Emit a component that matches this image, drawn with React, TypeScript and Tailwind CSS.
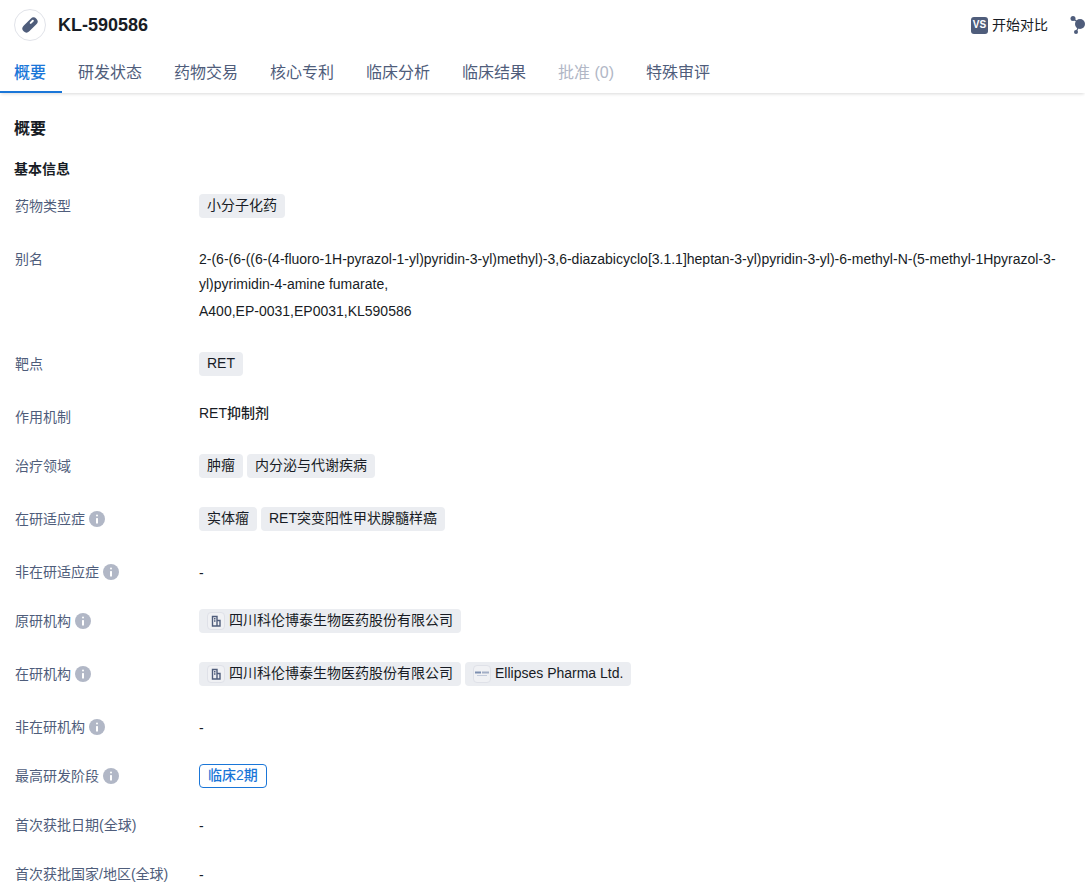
import React from 'react';

const font = "font-['Liberation_Sans','Noto_Sans_CJK_SC',sans-serif]";

const tabs = [
  { label: '研发状态' },
  { label: '药物交易' },
  { label: '核心专利' },
  { label: '临床分析' },
  { label: '临床结果' },
  { label: '批准 (0)', disabled: true },
  { label: '特殊审评' },
];

const InfoIcon = () => (
  <svg width="16" height="16" viewBox="0 0 16 16" className="ml-1 shrink-0">
    <circle cx="8" cy="8" r="8" fill="#b1b7c6" />
    <rect x="7" y="3.5" width="2" height="2" rx="1" fill="#fff" />
    <rect x="7" y="7" width="2" height="5.5" rx="0.5" fill="#fff" />
  </svg>
);

const Tag = ({ children }: { children: React.ReactNode }) => (
  <span className="inline-flex h-6 items-center rounded bg-[#ebedf1] px-2 pb-0.5 text-sm leading-6 text-[#181c25]">
    {children}
  </span>
);

const OrgTag = ({ name, logo }: { name: string; logo?: boolean }) => (
  <span className="inline-flex h-6 items-center rounded bg-[#ebedf1] px-2 text-sm leading-6 text-[#181c25]">
    <span className="mr-1 flex h-[18px] w-[18px] items-center justify-center rounded border border-[#dfe1e8] bg-[#f0f1f4]">
      {logo ? (
        <svg width="16" height="8" viewBox="0 0 16 8">
          <rect x="1" y="1.5" width="6" height="2" fill="#7d8fb0" />
          <rect x="8" y="1.5" width="7" height="2" fill="#a3afc6" />
          <rect x="3" y="5" width="10" height="1" fill="#c3cbdb" />
        </svg>
      ) : (
        <svg width="12" height="12" viewBox="0 0 12 12" fill="none" stroke="#4f5d7b" strokeWidth="1.4">
          <path d="M2.5 11V1.5h4.5V11zM7 5.5h3V11H7" />
          <path d="M4 3.8h1.5M4 6h1.5" />
        </svg>
      )}
    </span>
    <span className="pb-0.5">{name}</span>
  </span>
);

const Row = ({
  label,
  info,
  children,
}: {
  label: string;
  info?: boolean;
  children: React.ReactNode;
}) => (
  <div className="flex pb-[25px]">
    <div className="flex h-6 w-[185px] shrink-0 items-center pl-px text-sm text-[#4f5d7b]">
      {label}
      {info && <InfoIcon />}
    </div>
    <div className="min-w-0 flex-1 text-sm text-[#181c25]">{children}</div>
  </div>
);

const TagRow = ({ children }: { children: React.ReactNode }) => (
  <div className="flex gap-1 pb-1">{children}</div>
);

const Dash = () => <div className="h-6 leading-[26px]">-</div>;

export default function App() {
  return (
    <div className={`${font} h-[891px] w-[1085px] overflow-hidden bg-white`}>
      <div className="flex h-[50px] items-center justify-between pl-3.5">
        <div className="flex items-center gap-3">
          <div className="flex h-8 w-8 items-center justify-center rounded-full border border-[#e1e3e9]">
            <svg width="20" height="20" viewBox="0 0 20 20">
              <g transform="rotate(-45 10 10)">
                <rect x="1" y="6" width="18" height="8" rx="4" fill="#4f5d7b" />
                <rect x="11" y="8" width="5" height="2" rx="1" fill="#fff" />
              </g>
            </svg>
          </div>
          <div className="text-lg font-bold text-[#181c25]">KL-590586</div>
        </div>
        <div className="flex items-center">
          <div className="flex items-center text-sm text-[#181c25]">
            <span className="mr-1 flex h-[17px] w-[17px] items-center justify-center rounded-[3px] bg-[#4f5d7b] text-[10px] font-bold text-white">
              VS
            </span>
            开始对比
          </div>
          <svg width="16" height="18" viewBox="0 0 16 18" className="ml-[22px] mr-[-1px]" fill="#4f5d7b">
            <circle cx="3" cy="2.5" r="2.5" />
            <circle cx="10" cy="8" r="5" />
            <circle cx="6" cy="16" r="2" />
            <path d="M3 2.5L10 8L6 16" fill="none" stroke="#4f5d7b" strokeWidth="1.2" />
          </svg>
        </div>
      </div>

      <div className="flex h-[43px] items-center shadow-[0_2px_3px_-1px_rgba(0,0,0,0.15)]">
        <div className="flex h-full items-center border-b-2 border-[#1a76d8] pl-3.5 pr-4 pt-1 text-base font-medium text-[#1a76d8]">
          概要
        </div>
        {tabs.map((tab) => (
          <div
            key={tab.label}
            className={`flex h-full items-center px-4 pt-0.5 text-base ${
              tab.disabled ? 'text-[#b1b7c6]' : 'text-[#4f5d7b]'
            }`}
          >
            {tab.label}
          </div>
        ))}
      </div>

      <div className="px-3.5">
        <div className="mt-6 text-base font-bold leading-6 text-[#181c25]">概要</div>
        <div className="mt-4 mb-[13px] text-sm font-bold leading-6 text-[#181c25]">基本信息</div>

        <Row label="药物类型">
          <TagRow><Tag>小分子化药</Tag></TagRow>
        </Row>
        <Row label="别名">
          <div className="mb-[3px] leading-[25px]">
            <div>
              2-(6-(6-((6-(4-fluoro-1H-pyrazol-1-yl)pyridin-3-yl)methyl)-3,6-diazabicyclo[3.1.1]heptan-3-yl)pyridin-3-yl)-6-methyl-N-(5-methyl-1Hpyrazol-3-yl)pyrimidin-4-amine fumarate,
            </div>
            <div className="mt-0.5">A400,EP-0031,EP0031,KL590586</div>
          </div>
        </Row>
        <Row label="靶点">
          <TagRow><Tag>RET</Tag></TagRow>
        </Row>
        <Row label="作用机制">
          <div className="-mt-1 font-medium leading-6">RET抑制剂</div>
        </Row>
        <Row label="治疗领域">
          <TagRow><Tag>肿瘤</Tag><Tag>内分泌与代谢疾病</Tag></TagRow>
        </Row>
        <Row label="在研适应症" info>
          <TagRow><Tag>实体瘤</Tag><Tag>RET突变阳性甲状腺髓样癌</Tag></TagRow>
        </Row>
        <Row label="非在研适应症" info>
          <Dash />
        </Row>
        <Row label="原研机构" info>
          <TagRow><OrgTag name="四川科伦博泰生物医药股份有限公司" /></TagRow>
        </Row>
        <Row label="在研机构" info>
          <TagRow>
            <OrgTag name="四川科伦博泰生物医药股份有限公司" />
            <OrgTag name="Ellipses Pharma Ltd." logo />
          </TagRow>
        </Row>
        <Row label="非在研机构" info>
          <Dash />
        </Row>
        <Row label="最高研发阶段" info>
          <span className="inline-flex h-6 items-center rounded border border-[#1a76d8] px-2 pb-0.5 text-sm font-medium text-[#1a76d8]">
            临床2期
          </span>
        </Row>
        <Row label="首次获批日期(全球)">
          <Dash />
        </Row>
        <Row label="首次获批国家/地区(全球)">
          <Dash />
        </Row>
      </div>
    </div>
  );
}
